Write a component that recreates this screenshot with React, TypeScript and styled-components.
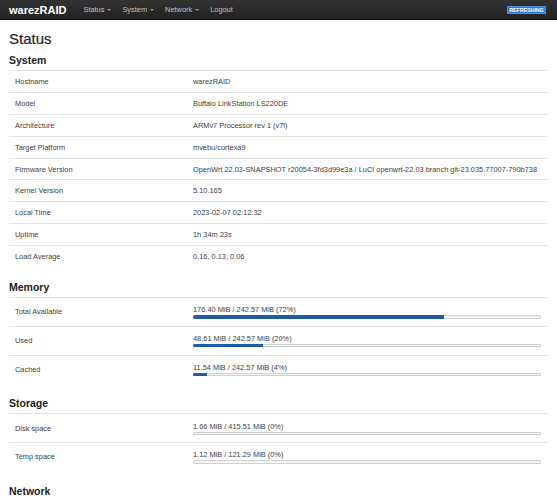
import React from "react";
import styled, { createGlobalStyle } from "styled-components";

const GlobalStyle = createGlobalStyle`
  html, body {
    margin: 0;
    padding: 0;
    background: #fff;
    font-family: "Liberation Sans", Arial, sans-serif;
    color: #404040;
  }
`;

const Navbar = styled.header`
  display: flex;
  align-items: center;
  height: 20px;
  padding: 0 11px 0 9px;
  background: linear-gradient(#333333, #222222);
  border-bottom: 1px solid #111;
  box-sizing: border-box;
`;

const Brand = styled.a`
  font-size: 11px;
  font-weight: bold;
  color: #fff;
  margin-right: 11.5px;
  line-height: 20px;
`;

const Menu = styled.nav`
  display: flex;
  align-items: center;
  flex: 1;
`;

const MenuItem = styled.span`
  display: flex;
  align-items: center;
  gap: 3px;
  padding: 0 5.5px;
  font-size: 7.4px;
  color: #c4c4c4;
  line-height: 20px;
`;

const Caret = styled.span`
  width: 0;
  height: 0;
  border-left: 2px solid transparent;
  border-right: 2px solid transparent;
  border-top: 2px solid #9a9a9a;
`;

const Badge = styled.span`
  display: inline-flex;
  align-items: center;
  justify-content: center;
  width: 39px;
  height: 8px;
  box-sizing: border-box;
  background: #2b7bd6;
  border: 1px solid #4b97e6;
  color: #fff;
  font-size: 5.4px;
  font-weight: bold;
  letter-spacing: -0.1px;
`;

const Main = styled.main`
  padding: 0 10px 0 9px;
`;

const Title = styled.h2`
  margin: 10px 0 6px;
  font-size: 15px;
  line-height: 18px;
  font-weight: normal;
  color: #1e1e1e;
  -webkit-text-stroke: 0.2px #1e1e1e;
`;

const SectionTitle = styled.h3<{ $first?: boolean }>`
  margin: ${(p) => (p.$first ? 0 : "14px")} 0 3px;
  font-size: 10.5px;
  line-height: 13px;
  font-weight: bold;
  color: #222;
`;

const Table = styled.div`
  display: flex;
  flex-direction: column;
`;

const Row = styled.div<{ $h: number }>`
  display: grid;
  grid-template-columns: 178px 1fr;
  align-items: center;
  height: ${(p) => p.$h}px;
  padding: 0 6px;
  border-top: 1px solid #e2e2e2;
  box-sizing: border-box;
  font-size: 7.4px;
  color: #404040;
`;

const Label = styled.div`
  line-height: 9px;
`;

const Value = styled.div`
  line-height: 9px;
  white-space: nowrap;
`;

const Progress = styled.div`
  display: flex;
  flex-direction: column;
`;

const ProgressText = styled.div`
  line-height: 9px;
`;

const Track = styled.div`
  margin-top: 1px;
  height: 3.5px;
  border-radius: 2px;
  background: #f4f4f4;
  box-shadow: inset 0 0 0 1px #cfcfcf;
  overflow: hidden;
`;

const Fill = styled.div`
  height: 100%;
  background: #1f5ca7;
`;

const system: [string, string][] = [
  ["Hostname", "warezRAID"],
  ["Model", "Buffalo LinkStation LS220DE"],
  ["Architecture", "ARMv7 Processor rev 1 (v7l)"],
  ["Target Platform", "mvebu/cortexa9"],
  [
    "Firmware Version",
    "OpenWrt 22.03-SNAPSHOT r20054-3fd3d99e3a / LuCI openwrt-22.03 branch git-23.035.77007-790b738",
  ],
  ["Kernel Version", "5.10.165"],
  ["Local Time", "2023-02-07 02:12:32"],
  ["Uptime", "1h 34m 23s"],
  ["Load Average", "0.16, 0.13, 0.06"],
];

const memory: [string, string, number][] = [
  ["Total Available", "176.40 MiB / 242.57 MiB (72%)", 72],
  ["Used", "48.61 MiB / 242.57 MiB (20%)", 20],
  ["Cached", "11.54 MiB / 242.57 MiB (4%)", 4],
];

const storage: [string, string, number][] = [
  ["Disk space", "1.66 MiB / 415.51 MiB (0%)", 0],
  ["Temp space", "1.12 MiB / 121.29 MiB (0%)", 0],
];

function BarRows({ rows, h }: { rows: [string, string, number][]; h: number }) {
  return (
    <Table>
      {rows.map(([label, text, pct]) => (
        <Row key={label} $h={h}>
          <Label>{label}</Label>
          <Progress>
            <ProgressText>{text}</ProgressText>
            <Track>
              <Fill style={{ width: `${pct}%` }} />
            </Track>
          </Progress>
        </Row>
      ))}
    </Table>
  );
}

export default function App() {
  return (
    <>
      <GlobalStyle />
      <Navbar>
        <Brand>warezRAID</Brand>
        <Menu>
          <MenuItem>
            Status <Caret />
          </MenuItem>
          <MenuItem>
            System <Caret />
          </MenuItem>
          <MenuItem>
            Network <Caret />
          </MenuItem>
          <MenuItem>Logout</MenuItem>
        </Menu>
        <Badge>REFRESHING</Badge>
      </Navbar>
      <Main>
        <Title>Status</Title>
        <SectionTitle $first>System</SectionTitle>
        <Table>
          {system.map(([label, value]) => (
            <Row key={label} $h={21.9}>
              <Label>{label}</Label>
              <Value>{value}</Value>
            </Row>
          ))}
        </Table>
        <SectionTitle>Memory</SectionTitle>
        <BarRows rows={memory} h={28.8} />
        <SectionTitle>Storage</SectionTitle>
        <BarRows rows={storage} h={28.7} />
        <SectionTitle>Network</SectionTitle>
      </Main>
    </>
  );
}
